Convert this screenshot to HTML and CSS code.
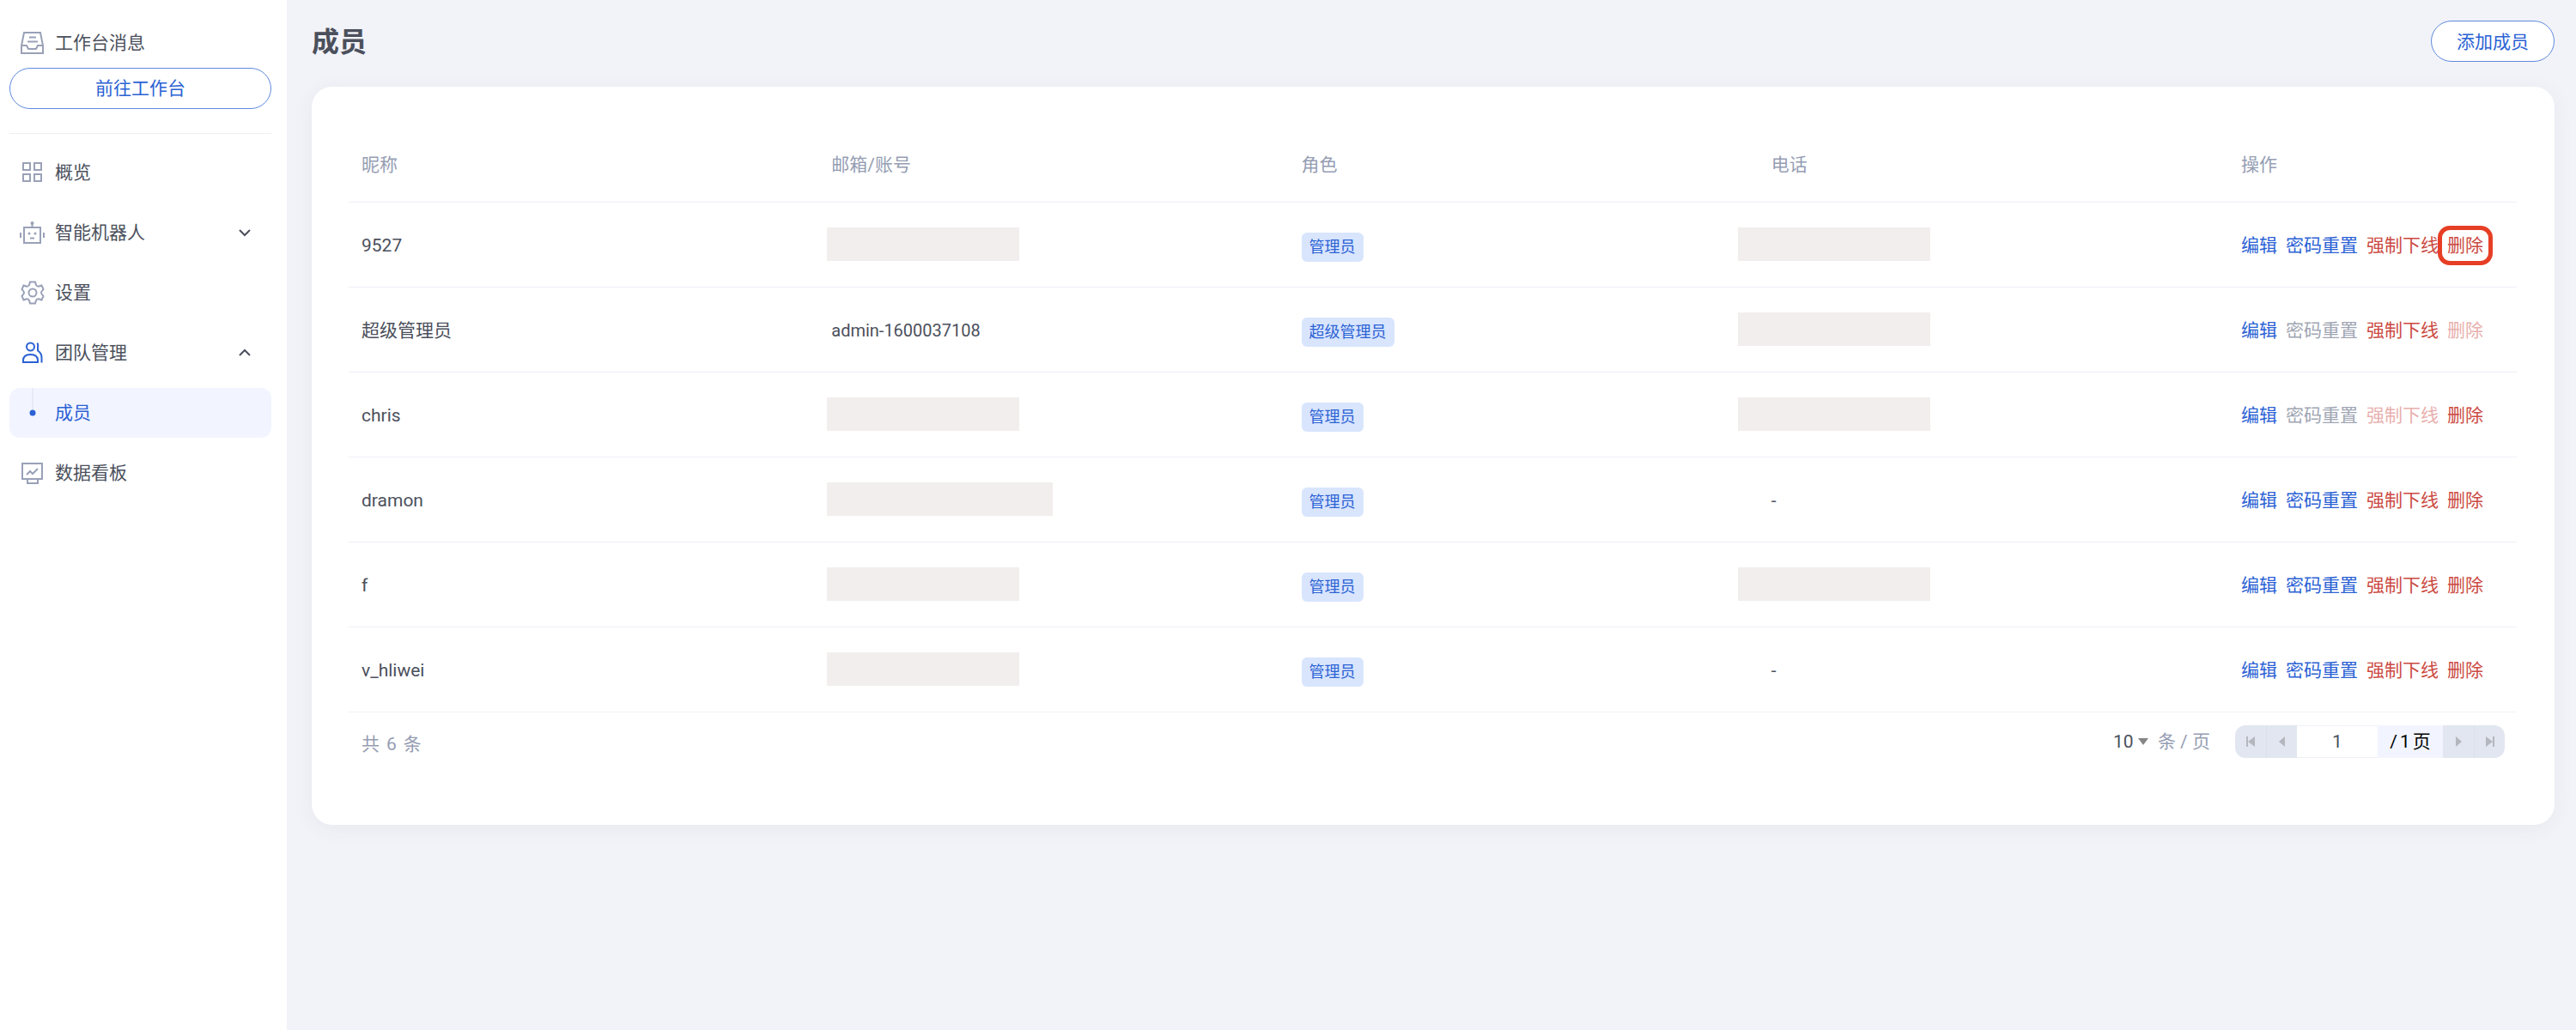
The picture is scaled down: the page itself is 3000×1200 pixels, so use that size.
FILE: index.html
```html
<!DOCTYPE html>
<html lang="zh-CN">
<head>
    <meta charset="UTF-8">
    <meta name="viewport" content="width=device-width, initial-scale=1.0">
    <title>成员</title>
    <link rel="stylesheet" href="styles.css">
</head>
<body>
    <aside class="sidebar">
        <div class="inbox">
            <svg class="icon" viewBox="0 0 30 30"><path d="M5 3h19l3 15v9H2v-9zM2 18h6l2 4h9l2-4h6M11 8.500h8M9 13.500h12"/></svg>
            <span>工作台消息</span>
        </div>
        <button class="btn btn-block">前往工作台</button>
        <nav class="menu">
            <a class="menu-item" href="#">
                <svg class="icon" viewBox="0 0 30 30"><path d="M4 4h8v8H4zM17 4h8v8h-8zM4 17h8v8H4zM17 17h8v8h-8z"/></svg>
                <span>概览</span>
            </a>
            <a class="menu-item" href="#">
                <svg class="icon" viewBox="0 0 30 30"><path d="M5 9h19v18H5zM14.500 4v5M1 15v6M28 15v6M12 21.500h5"/><circle class="fill" cx="14.500" cy="4" r="2"/><circle class="fill" cx="11" cy="16" r="1.500"/><circle class="fill" cx="18" cy="16" r="1.500"/></svg>
                <span>智能机器人</span>
                <svg class="arrow" viewBox="0 0 14 14"><path d="M1 4l6 6 6-6"/></svg>
            </a>
            <a class="menu-item" href="#">
                <svg class="icon" viewBox="0 0 30 30"><path d="M12 2.500h6l1 3.500c1 1.500 2 2 3.500 1.500l3-1 2 4.500-2 2.500c-.7 1-.7 2 0 3l2 2.500-2 4.500-3-1c-1.500-.5-2.500 0-3.500 1.500l-1 3.500h-6l-1-3.500c-1-1.500-2-2-3.500-1.500l-3 1-2-4.500 2-2.500c.7-1 .7-2 0-3l-2-2.500 2-4.500 3 1c1.500.5 2.500 0 3.500-1.500z"/><circle cx="15" cy="15" r="4.500"/></svg>
                <span>设置</span>
            </a>
            <a class="menu-item open" href="#">
                <svg class="icon" viewBox="0 0 30 30"><circle cx="12.500" cy="8" r="4.500"/><path d="M4 26v-2c0-5 3-7 8.500-7s8.500 2 8.500 7v2zM20.500 3.500c1 2 1 4 .5 6v3c3 2 4.500 4.500 4.500 8v6"/></svg>
                <span>团队管理</span>
                <svg class="arrow" viewBox="0 0 14 14"><path d="M1 10l6-6 6 6"/></svg>
            </a>
            <a class="menu-item active" href="#">
                <svg class="icon tree" viewBox="0 0 30 58"><path d="M15 0v29"/><circle cx="15" cy="29" r="3.500"/></svg>
                <span>成员</span>
            </a>
            <a class="menu-item" href="#">
                <svg class="icon" viewBox="0 0 30 30"><path d="M3 4h23v18H3zM9 22v5h12v-5M8 17l4-4 3 3 6-6"/></svg>
                <span>数据看板</span>
            </a>
        </nav>
    </aside>

    <main class="main">
        <header class="page-head">
            <h1>成员</h1>
            <button class="btn">添加成员</button>
        </header>

        <section class="card">
            <table class="members">
                <thead>
                    <tr><th>昵称</th><th>邮箱/账号</th><th>角色</th><th>电话</th><th class="col-action">操作</th></tr>
                </thead>
                <tbody>
                    <tr>
                        <td>9527</td>
                        <td class="account"><span class="mask"></span></td>
                        <td><span class="tag">管理员</span></td>
                        <td><span class="mask mask-phone"></span></td>
                        <td><div class="actions"><button>编辑</button><button>密码重置</button><button class="danger">强制下线</button><button class="danger marked">删除</button></div></td>
                    </tr>
                    <tr>
                        <td>超级管理员</td>
                        <td class="account">admin-1600037108</td>
                        <td><span class="tag">超级管理员</span></td>
                        <td><span class="mask mask-phone"></span></td>
                        <td><div class="actions"><button>编辑</button><button disabled>密码重置</button><button class="danger">强制下线</button><button class="danger" disabled>删除</button></div></td>
                    </tr>
                    <tr>
                        <td>chris</td>
                        <td class="account"><span class="mask"></span></td>
                        <td><span class="tag">管理员</span></td>
                        <td><span class="mask mask-phone"></span></td>
                        <td><div class="actions"><button>编辑</button><button disabled>密码重置</button><button class="danger" disabled>强制下线</button><button class="danger">删除</button></div></td>
                    </tr>
                    <tr>
                        <td>dramon</td>
                        <td class="account"><span class="mask mask-long"></span></td>
                        <td><span class="tag">管理员</span></td>
                        <td>-</td>
                        <td><div class="actions"><button>编辑</button><button>密码重置</button><button class="danger">强制下线</button><button class="danger">删除</button></div></td>
                    </tr>
                    <tr>
                        <td>f</td>
                        <td class="account"><span class="mask"></span></td>
                        <td><span class="tag">管理员</span></td>
                        <td><span class="mask mask-phone"></span></td>
                        <td><div class="actions"><button>编辑</button><button>密码重置</button><button class="danger">强制下线</button><button class="danger">删除</button></div></td>
                    </tr>
                    <tr>
                        <td>v_hliwei</td>
                        <td class="account"><span class="mask"></span></td>
                        <td><span class="tag">管理员</span></td>
                        <td>-</td>
                        <td><div class="actions"><button>编辑</button><button>密码重置</button><button class="danger">强制下线</button><button class="danger">删除</button></div></td>
                    </tr>
                </tbody>
            </table>

            <footer class="table-foot">
                <div class="total"><span>共</span><span>6</span><span>条</span></div>
                <div class="page-size">
                    <select id="pageSize"><option>10</option></select>
                    <svg class="caret" viewBox="0 0 12 8"><path d="M0 0h12L6 8z"/></svg>
                    <label for="pageSize">条 / 页</label>
                </div>
                <div class="pager">
                    <button aria-label="首页" disabled><svg viewBox="0 0 12 14"><path d="M1 1h2v12H1zM11 1v12L3 7z"/></svg></button>
                    <button aria-label="上一页" disabled><svg viewBox="0 0 12 14"><path d="M9 1v12L2 7z"/></svg></button>
                    <input type="text" value="1" aria-label="页码">
                    <div class="pages"><span>/</span><span>1</span><span>页</span></div>
                    <button aria-label="下一页" disabled><svg viewBox="0 0 12 14"><path d="M3 1v12l7-6z"/></svg></button>
                    <button aria-label="末页" disabled><svg viewBox="0 0 12 14"><path d="M9 1h2v12H9zM1 1v12l8-6z"/></svg></button>
                </div>
            </footer>
        </section>
    </main>
</body>
</html>
```
FILE: styles.css
```css
* {
    box-sizing: border-box;
}
body {
    margin: 0;
    min-height: 100vh;
    display: flex;
    font-family: Roboto, "Noto Sans CJK SC", sans-serif;
    font-size: 21px;
    line-height: 30px;
    color: #4b505c;
    background-color: #f2f3f8;
}
button, input, select {
    font: inherit;
    color: inherit;
    margin: 0;
    padding: 0;
    border: none;
    background: none;
}
button {
    cursor: pointer;
}

/* sidebar */
.sidebar {
    width: 334px;
    flex: none;
    padding: 35px 18px 0 11px;
    background-color: #fff;
}
.inbox {
    display: flex;
    align-items: center;
    gap: 11px;
    height: 30px;
    padding-left: 12px;
    margin-bottom: 14px;
}
.icon {
    width: 30px;
    height: 30px;
    flex: none;
    fill: none;
    stroke: #9aa1b8;
    stroke-width: 2;
}
.icon .fill {
    fill: #9aa1b8;
    stroke: none;
}
.btn {
    height: 48px;
    padding: 2px 29px 0;
    border: 1px solid #5f8ade;
    border-radius: 24px;
    background-color: #fff;
    color: #2b62d4;
}
.btn-block {
    display: block;
    width: 100%;
    padding-top: 0;
}
.menu {
    display: flex;
    flex-direction: column;
    gap: 12px;
    margin-top: 28px;
    padding-top: 16px;
    border-top: 1px solid #eeeff3;
}
.menu-item {
    display: flex;
    align-items: center;
    gap: 11px;
    height: 58px;
    padding: 0 24px 0 12px;
    border-radius: 12px;
    color: inherit;
    text-decoration: none;
}
.menu-item.open .icon {
    stroke: #2b62d4;
}
.menu-item.active {
    background-color: #f2f5ff;
    color: #2b62d4;
}
.menu-item .tree {
    height: 58px;
    stroke: #e6eaf5;
}
.tree circle {
    fill: #2b62d4;
    stroke: none;
}
.arrow {
    width: 14px;
    height: 14px;
    margin-left: auto;
    fill: none;
    stroke: #4b505c;
    stroke-width: 2;
}

/* content */
.main {
    flex: 1;
    min-width: 0;
    padding: 24px 25px 0 29px;
}
.page-head {
    display: flex;
    align-items: center;
    justify-content: space-between;
    margin-bottom: 29px;
}
h1 {
    margin: 0;
    padding-top: 2px;
    font-size: 32px;
    line-height: 46px;
}
.card {
    padding: 46px 44px 78px 43px;
    border-radius: 24px;
    background-color: #fff;
    box-shadow: 0 4px 24px rgba(40, 60, 110, 0.06);
}
.members {
    width: 100%;
    table-layout: fixed;
    border-collapse: collapse;
}
.members th,
.members td {
    height: 99px;
    padding: 3px 0 0 15px;
    border-bottom: 1px solid #eef0f8;
    text-align: left;
    font-weight: 400;
}
.members th {
    height: 88px;
    color: #959db3;
}
.members .account {
    font-size: 20px;
}
.members .col-action {
    width: 336px;
}
.mask {
    display: block;
    width: 224px;
    height: 39px;
    margin: -4px 0 0 -5px;
    background-color: #f2eeed;
}
.mask-long {
    width: 263px;
}
.mask-phone {
    margin-left: -39px;
}
.tag {
    display: inline-block;
    margin-top: 4px;
    padding: 0 9px;
    border-radius: 6px;
    background-color: #d8e5fd;
    color: #2b62d4;
    font-size: 18px;
    line-height: 34px;
}
.actions {
    display: flex;
    gap: 10px;
}
.actions button {
    flex: none;
    line-height: 24px;
    color: #2b62d4;
}
.actions button:disabled {
    color: #a0a6b3;
}
.actions .danger {
    color: #cb4a42;
}
.actions .danger:disabled {
    color: #e8b0ad;
}
.marked {
    border-radius: 3px;
    outline: 5px solid #e63f25;
    outline-offset: 6px;
}

/* pagination */
.table-foot {
    display: flex;
    align-items: center;
    padding: 15px 14px 0 15px;
    color: #959db3;
}
.total {
    display: flex;
    gap: 8px;
    margin-right: auto;
    padding-top: 6px;
}
.page-size {
    display: flex;
    align-items: center;
    margin-right: 29px;
}
.page-size select {
    appearance: none;
    color: #4b505c;
}
.caret {
    width: 12px;
    height: 8px;
    margin: 0 11px 0 5px;
    fill: #868686;
}
.pager {
    display: flex;
    height: 38px;
    border-radius: 12px;
    overflow: hidden;
}
.pager button {
    width: 36px;
    background-color: #e2e6f0;
    display: flex;
    align-items: center;
    justify-content: center;
}
.pager button + button {
    border-left: 1px solid #dadfeb;
}
.pager svg {
    width: 12px;
    height: 14px;
    fill: #b4b7be;
}
.pager input {
    width: 94px;
    border: solid #eef0f8;
    border-width: 1px 0;
    text-align: center;
    color: #4b505c;
}
.pages {
    display: flex;
    justify-content: center;
    gap: 3px;
    width: 76px;
    line-height: 38px;
    color: #000;
    background-color: #f2f5ff;
}
```
